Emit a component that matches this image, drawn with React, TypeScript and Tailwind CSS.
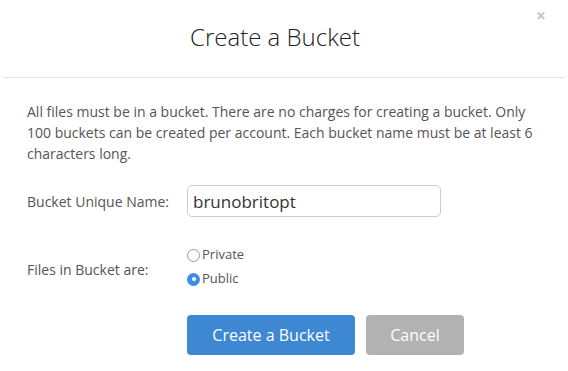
import React, { useState } from 'react';

export default function App() {
  const [name, setName] = useState('brunobritopt');
  const [visibility, setVisibility] = useState<'private' | 'public'>('public');

  return (
    <div
      className="relative w-[568px] h-[371px] bg-white text-[#555]"
      style={{ fontFamily: '"Open Sans", "Liberation Sans", sans-serif' }}
    >
      <button className="absolute right-[22px] top-[6px] text-[18px] font-bold leading-none text-[#c8c8c8]">
        ×
      </button>

      <div className="mx-[3px] h-[78px] flex items-center justify-center border-b border-[#e5e5e5] pb-[4px] pr-[18px]">
        <h1 className="text-[24px] font-light text-[#222]">Create a Bucket</h1>
      </div>

      <div className="px-[27px] pt-[23px]">
        <p className="text-[14px] leading-[21px]">
          All files must be in a bucket. There are no charges for creating a bucket. Only 100 buckets can be created per
          account. Each bucket name must be at least 6 characters long.
        </p>

        <div className="mt-[21px] flex items-center">
          <label className="w-[160px] text-[14px]">Bucket Unique Name:</label>
          <input
            value={name}
            onChange={(e) => setName(e.target.value)}
            className="w-[254px] h-[32px] px-[5px] rounded-[5px] border border-[#ccc] text-[17px] text-[#333] outline-none"
          />
        </div>

        <div className="mt-[29px] flex items-start">
          <span className="w-[160px] pt-[14px] text-[14px] leading-[20px]">Files in Bucket are:</span>
          <div className="flex flex-col gap-[6px] text-[13px]">
            {(['private', 'public'] as const).map((v) => (
              <label
                key={v}
                className="h-[18px] flex items-center gap-[2px] cursor-pointer"
                onClick={() => setVisibility(v)}
              >
                <span
                  className={
                    visibility === v
                      ? 'w-[13px] h-[13px] rounded-full bg-[#3b8de8] flex items-center justify-center'
                      : 'w-[13px] h-[13px] rounded-full border border-[#999] bg-white'
                  }
                >
                  {visibility === v && <span className="w-[4px] h-[4px] rounded-full bg-white" />}
                </span>
                <span>{v === 'private' ? 'Private' : 'Public'}</span>
              </label>
            ))}
          </div>
        </div>

        <div className="mt-[27px] pl-[160px] flex gap-[11px]">
          <button className="w-[168px] h-[40px] rounded-[4px] bg-[#3d87d3] text-white text-[16px]">Create a Bucket</button>
          <button className="w-[98px] h-[40px] rounded-[4px] bg-[#b2b2b2] text-white text-[16px]">Cancel</button>
        </div>
      </div>
    </div>
  );
}
